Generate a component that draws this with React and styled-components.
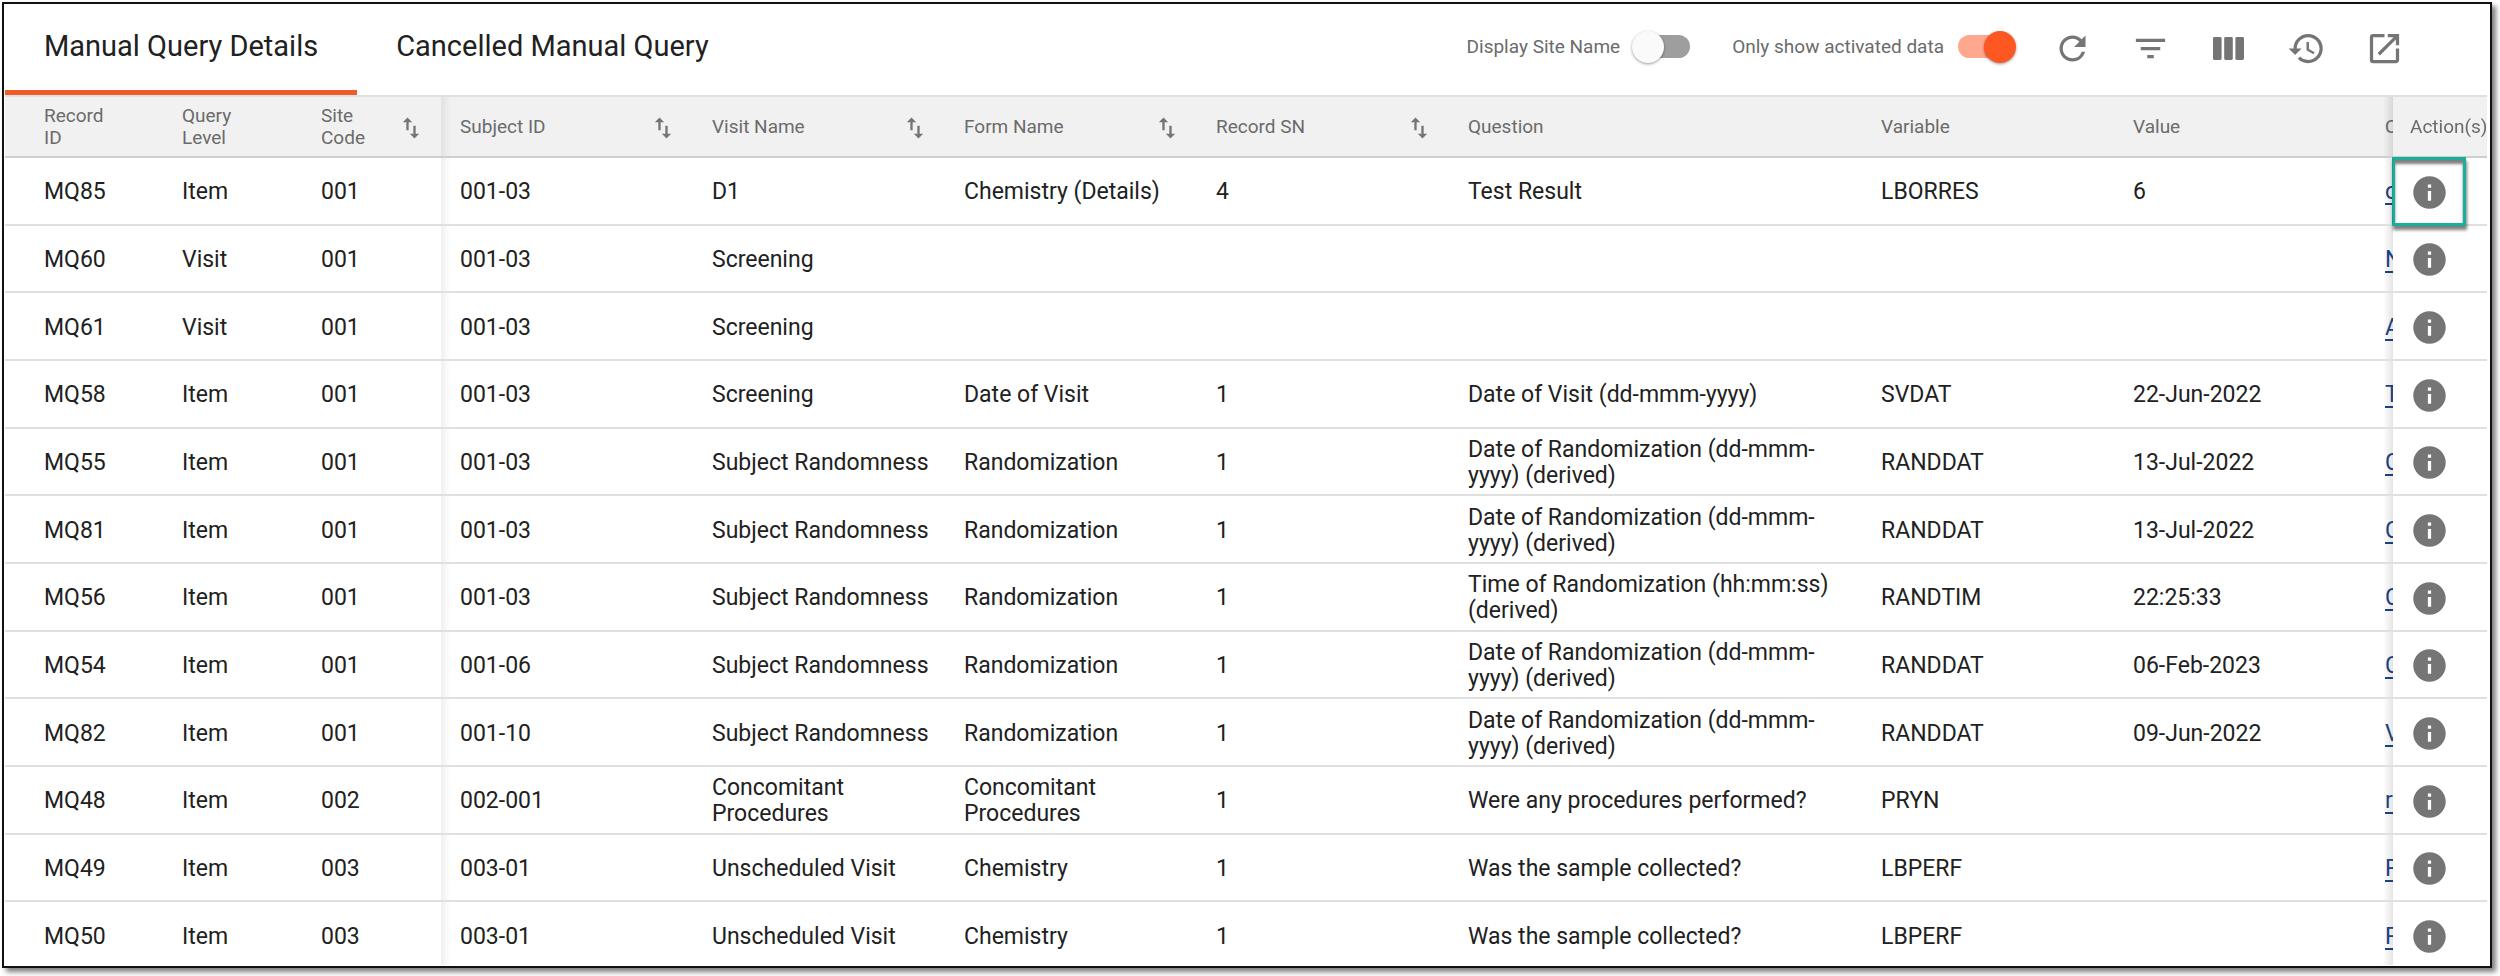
import React, { useState } from 'react';
import styled, { createGlobalStyle, css } from 'styled-components';
import { MdRefresh, MdFilterList, MdHistory, MdOpenInNew, MdInfo, MdSwapVert } from 'react-icons/md';

const GlobalStyle = createGlobalStyle`
  * {
    box-sizing: border-box;
  }

  body {
    margin: 0;
    background-color: #ffffff;
    color: #212121;
    font-family: Roboto, 'Liberation Sans', sans-serif;
    font-size: 23px;
  }
`;

const Page = styled.div`
  height: 100vh;
  padding: 2px 8px 8px 2px;
`;

const Frame = styled.main`
  display: flex;
  flex-direction: column;
  height: 100%;
  padding: 0 3px 1px 1px;
  border: 2px solid #111111;
  background-color: #ffffff;
  box-shadow: 4px 4px 5px rgba(0, 0, 0, 0.5);
`;

const Toolbar = styled.header`
  display: flex;
  flex: none;
  justify-content: space-between;
  height: 93px;
  border-bottom: 2px solid #e0e0e0;
`;

const Tabs = styled.div`
  display: flex;
`;

const Tab = styled.button`
  padding: 0 39px 2px;
  border: 0;
  border-bottom: 5px solid ${(props) => (props.$active ? '#f15a29' : 'transparent')};
  background: none;
  color: #212121;
  font-family: inherit;
  font-size: 29px;
  cursor: pointer;
`;

const Tools = styled.div`
  display: flex;
  align-items: center;
  gap: 39px;
  padding: 0 83px 2px 0;
`;

const Switches = styled.div`
  display: flex;
  gap: 42px;
  padding-bottom: 4px;
`;

const SwitchLabel = styled.label`
  display: flex;
  align-items: center;
  gap: 14px;
  color: #6b6b6b;
  font-size: 19px;
`;

const Switch = styled.input`
  display: flex;
  align-items: center;
  appearance: none;
  width: 56px;
  height: 23px;
  margin: 0;
  border-radius: 12px;
  background-color: ${(props) => (props.checked ? '#ffa78f' : '#9e9e9e')};
  cursor: pointer;

  &::before {
    content: '';
    flex: none;
    width: 32px;
    height: 32px;
    border-radius: 50%;
    background-color: ${(props) => (props.checked ? '#ff5722' : '#fafafa')};
    box-shadow: 0 1px 3px rgba(0, 0, 0, 0.4);
    transform: translateX(${(props) => (props.checked ? '26px' : '-2px')});
  }
`;

const IconButton = styled.button`
  display: flex;
  padding: 0;
  border: 0;
  background: none;
  color: #757575;
  cursor: pointer;
`;

const Scroller = styled.div`
  flex: 1;
  min-height: 0;
  overflow: auto;
  scrollbar-width: none;
`;

const Table = styled.table`
  table-layout: fixed;
  width: 2706px;
  height: calc(100% + 5px);
  border-collapse: separate;
  border-spacing: 0;
`;

const Col = styled.col`
  width: ${(props) => props.$width}px;
`;

const pinned = css`
  position: sticky;
  z-index: 1;
  ${(props) => props.$left !== undefined && `left: ${props.$left}px;`}
  ${(props) => props.$right !== undefined && `right: ${props.$right}px;`}
`;

// soft shadow where the scrolled columns pass under a pinned one
const edge = css`
  &::after {
    content: '';
    position: absolute;
    top: 0;
    bottom: 0;
    ${(props) => (props.$edge === 'right' ? 'left: 100%;' : 'right: 100%;')}
    width: 10px;
    background: linear-gradient(
      to ${(props) => props.$edge},
      rgba(0, 0, 0, ${(props) => (props.$edge === 'right' ? 0.06 : 0.1)}),
      rgba(0, 0, 0, 0)
    );
    pointer-events: none;
  }
`;

const cell = css`
  padding-right: 12px;
  padding-left: 19px;
  text-align: left;

  &:first-child {
    padding-left: 39px;
  }

  &:last-child {
    padding-right: 0;
    padding-left: 17px;
  }

  ${(props) => (props.$left !== undefined || props.$right !== undefined) && pinned}
  ${(props) => props.$edge && edge}
`;

const HeadCell = styled.th`
  height: 61px;
  padding-top: 0;
  padding-bottom: 0;
  border-bottom: 2px solid #cfcfcf;
  background-color: #f1f1f1;
  color: #6b6b6b;
  font-size: 19px;
  font-weight: 400;
  line-height: 22px;
  ${cell}
`;

const HeadContent = styled.div`
  display: flex;
  align-items: center;
  justify-content: space-between;
  padding-right: ${(props) => (props.$sortable ? 4 : 32)}px;
`;

const SortButton = styled(IconButton)`
  padding-top: 3px;
`;

const Cell = styled.td`
  height: 67px;
  padding-top: 3px;
  padding-bottom: 0;
  border-bottom: 2px solid #e0e0e0;
  background-color: #ffffff;
  line-height: 26px;
  ${cell}
  ${(props) => props.$highlighted && 'z-index: 2;'}
`;

const QueryLink = styled.a`
  color: #1c4587;
  text-underline-offset: 4px;
`;

const Highlight = styled.span`
  position: absolute;
  top: -1px;
  bottom: -2px;
  left: -1px;
  width: 74px;
  border: 3px solid #1aae9b;
  box-shadow: 1px 4px 3px rgba(0, 0, 0, 0.5), inset 0 4px 3px rgba(0, 0, 0, 0.5);
  pointer-events: none;
`;

const ColumnsIcon = () => (
  <svg width="39" height="39" viewBox="0 0 39 39" fill="currentColor" aria-hidden="true">
    <rect x="4" y="8" width="8.6" height="23" rx="1.4" />
    <rect x="15.2" y="8" width="8.6" height="23" rx="1.4" />
    <rect x="26.4" y="8" width="8.6" height="23" rx="1.4" />
  </svg>
);

const columns = [
  { label: 'Record ID', width: 158, left: 0 },
  { label: 'Query Level', width: 139, left: 158 },
  { label: 'Site Code', width: 139, left: 297, edge: 'right', sortable: true },
  { label: 'Subject ID', width: 252, sortable: true },
  { label: 'Visit Name', width: 252, sortable: true },
  { label: 'Form Name', width: 252, sortable: true },
  { label: 'Record SN', width: 252, sortable: true },
  { label: 'Question', width: 413 },
  { label: 'Variable', width: 252 },
  { label: 'Value', width: 252 },
  { label: 'Q', width: 251 },
];

const randomizationDate = 'Date of Randomization (dd-mmm-yyyy) (derived)';

const rows = [
  ['MQ85', 'Item', '001', '001-03', 'D1', 'Chemistry (Details)', '4', 'Test Result', 'LBORRES', '6', 'o'],
  ['MQ60', 'Visit', '001', '001-03', 'Screening', '', '', '', '', '', 'N'],
  ['MQ61', 'Visit', '001', '001-03', 'Screening', '', '', '', '', '', 'A'],
  ['MQ58', 'Item', '001', '001-03', 'Screening', 'Date of Visit', '1', 'Date of Visit (dd-mmm-yyyy)', 'SVDAT', '22-Jun-2022', 'T'],
  ['MQ55', 'Item', '001', '001-03', 'Subject Randomness', 'Randomization', '1', randomizationDate, 'RANDDAT', '13-Jul-2022', 'C'],
  ['MQ81', 'Item', '001', '001-03', 'Subject Randomness', 'Randomization', '1', randomizationDate, 'RANDDAT', '13-Jul-2022', 'C'],
  ['MQ56', 'Item', '001', '001-03', 'Subject Randomness', 'Randomization', '1', 'Time of Randomization (hh:mm:ss) (derived)', 'RANDTIM', '22:25:33', 'C'],
  ['MQ54', 'Item', '001', '001-06', 'Subject Randomness', 'Randomization', '1', randomizationDate, 'RANDDAT', '06-Feb-2023', 'C'],
  ['MQ82', 'Item', '001', '001-10', 'Subject Randomness', 'Randomization', '1', randomizationDate, 'RANDDAT', '09-Jun-2022', 'V'],
  ['MQ48', 'Item', '002', '002-001', 'Concomitant Procedures', 'Concomitant Procedures', '1', 'Were any procedures performed?', 'PRYN', '', 're'],
  ['MQ49', 'Item', '003', '003-01', 'Unscheduled Visit', 'Chemistry', '1', 'Was the sample collected?', 'LBPERF', '', 'R'],
  ['MQ50', 'Item', '003', '003-01', 'Unscheduled Visit', 'Chemistry', '1', 'Was the sample collected?', 'LBPERF', '', 'R'],
];

const tabs = ['Manual Query Details', 'Cancelled Manual Query'];

const QueryTable = () => (
  <Table>
    <colgroup>
      {columns.map((column) => (
        <Col key={column.label} $width={column.width} />
      ))}
      <Col $width={94} />
    </colgroup>
    <thead>
      <tr>
        {columns.map((column) => (
          <HeadCell key={column.label} scope="col" $left={column.left} $edge={column.edge}>
            <HeadContent $sortable={column.sortable}>
              {column.label}
              {column.sortable && (
                <SortButton aria-label={`Sort by ${column.label}`}>
                  <MdSwapVert size={28} />
                </SortButton>
              )}
            </HeadContent>
          </HeadCell>
        ))}
        <HeadCell scope="col" $right={0} $edge="left">Action(s)</HeadCell>
      </tr>
    </thead>
    <tbody>
      {rows.map((row, rowIndex) => (
        <tr key={row[0]}>
          {row.map((value, index) => (
            <Cell key={columns[index].label} $left={columns[index].left} $edge={columns[index].edge}>
              {index === row.length - 1 ? <QueryLink href="#">{value}</QueryLink> : value}
            </Cell>
          ))}
          <Cell $right={0} $edge="left" $highlighted={rowIndex === 0}>
            <IconButton aria-label={`Details of ${row[0]}`}>
              <MdInfo size={39} />
            </IconButton>
            {rowIndex === 0 && <Highlight />}
          </Cell>
        </tr>
      ))}
    </tbody>
  </Table>
);

const App = () => {
  const [activeTab, setActiveTab] = useState(0);
  const [showSiteName, setShowSiteName] = useState(false);
  const [onlyActivated, setOnlyActivated] = useState(true);

  return (
    <Page>
      <GlobalStyle />
      <Frame>
        <Toolbar>
          <Tabs role="tablist">
            {tabs.map((tab, index) => (
              <Tab
                key={tab}
                role="tab"
                aria-selected={index === activeTab}
                $active={index === activeTab}
                onClick={() => setActiveTab(index)}
              >
                {tab}
              </Tab>
            ))}
          </Tabs>
          <Tools>
            <Switches>
              <SwitchLabel>
                Display Site Name
                <Switch type="checkbox" checked={showSiteName} onChange={(event) => setShowSiteName(event.target.checked)} />
              </SwitchLabel>
              <SwitchLabel>
                Only show activated data
                <Switch type="checkbox" checked={onlyActivated} onChange={(event) => setOnlyActivated(event.target.checked)} />
              </SwitchLabel>
            </Switches>
            <IconButton aria-label="Refresh"><MdRefresh size={39} /></IconButton>
            <IconButton aria-label="Filter"><MdFilterList size={39} /></IconButton>
            <IconButton aria-label="Columns"><ColumnsIcon /></IconButton>
            <IconButton aria-label="History"><MdHistory size={39} /></IconButton>
            <IconButton aria-label="Open in new window"><MdOpenInNew size={39} /></IconButton>
          </Tools>
        </Toolbar>
        <Scroller>
          <QueryTable />
        </Scroller>
      </Frame>
    </Page>
  );
};

export default App;
